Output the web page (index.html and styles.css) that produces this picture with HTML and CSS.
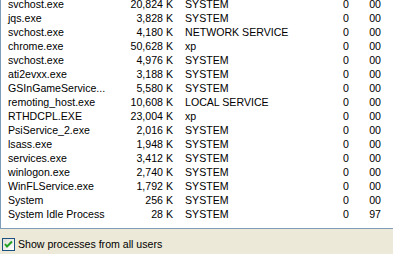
FILE: index.html
```html
<!DOCTYPE html>
<html>
<head>
<meta charset="utf-8">
<link rel="stylesheet" href="styles.css">
</head>
<body>
<div class="window">
  <div class="list">
    <div class="row"><span class="name">svchost.exe</span><span class="mem">20,824 K</span><span class="user">SYSTEM</span><span class="sess">0</span><span class="cpu">00</span></div>
    <div class="row"><span class="name">jqs.exe</span><span class="mem">3,828 K</span><span class="user">SYSTEM</span><span class="sess">0</span><span class="cpu">00</span></div>
    <div class="row"><span class="name">svchost.exe</span><span class="mem">4,180 K</span><span class="user">NETWORK SERVICE</span><span class="sess">0</span><span class="cpu">00</span></div>
    <div class="row"><span class="name">chrome.exe</span><span class="mem">50,628 K</span><span class="user">xp</span><span class="sess">0</span><span class="cpu">00</span></div>
    <div class="row"><span class="name">svchost.exe</span><span class="mem">4,976 K</span><span class="user">SYSTEM</span><span class="sess">0</span><span class="cpu">00</span></div>
    <div class="row"><span class="name">ati2evxx.exe</span><span class="mem">3,188 K</span><span class="user">SYSTEM</span><span class="sess">0</span><span class="cpu">00</span></div>
    <div class="row"><span class="name">GSInGameService...</span><span class="mem">5,580 K</span><span class="user">SYSTEM</span><span class="sess">0</span><span class="cpu">00</span></div>
    <div class="row"><span class="name">remoting_host.exe</span><span class="mem">10,608 K</span><span class="user">LOCAL SERVICE</span><span class="sess">0</span><span class="cpu">00</span></div>
    <div class="row"><span class="name">RTHDCPL.EXE</span><span class="mem">23,004 K</span><span class="user">xp</span><span class="sess">0</span><span class="cpu">00</span></div>
    <div class="row"><span class="name">PsiService_2.exe</span><span class="mem">2,016 K</span><span class="user">SYSTEM</span><span class="sess">0</span><span class="cpu">00</span></div>
    <div class="row"><span class="name">lsass.exe</span><span class="mem">1,948 K</span><span class="user">SYSTEM</span><span class="sess">0</span><span class="cpu">00</span></div>
    <div class="row"><span class="name">services.exe</span><span class="mem">3,412 K</span><span class="user">SYSTEM</span><span class="sess">0</span><span class="cpu">00</span></div>
    <div class="row"><span class="name">winlogon.exe</span><span class="mem">2,740 K</span><span class="user">SYSTEM</span><span class="sess">0</span><span class="cpu">00</span></div>
    <div class="row"><span class="name">WinFLService.exe</span><span class="mem">1,792 K</span><span class="user">SYSTEM</span><span class="sess">0</span><span class="cpu">00</span></div>
    <div class="row"><span class="name">System</span><span class="mem">256 K</span><span class="user">SYSTEM</span><span class="sess">0</span><span class="cpu">00</span></div>
    <div class="row"><span class="name">System Idle Process</span><span class="mem">28 K</span><span class="user">SYSTEM</span><span class="sess">0</span><span class="cpu">97</span></div>
  </div>
  <label class="footer">
    <span class="checkbox">
      <svg width="11" height="11" viewBox="0 0 11 11"><path d="M2 5 L4 7.5 L9 2.5" fill="none" stroke="#21a121" stroke-width="2"/></svg>
    </span>
    <span class="label">Show processes from all users</span>
  </label>
</div>
</body>
</html>
```
FILE: styles.css
```css
html, body {
  margin: 0;
  padding: 0;
  background: #ece9d8;
}
.window {
  width: 393px;
  height: 254px;
  display: flex;
  flex-direction: column;
  font-family: "Liberation Sans", Arial, sans-serif;
  font-size: 10.6px;
  color: #000;
  overflow: hidden;
}
.list {
  background: #fff;
  border-left: 1px solid #7f9db9;
  border-bottom: 1px solid #7f9db9;
  box-sizing: border-box;
  margin-top: -3px;
  height: 232px;
  flex: none;
}
.row {
  display: flex;
  height: 14px;
  line-height: 14px;
  white-space: nowrap;
}
.name {
  padding-left: 7px;
  width: 110px;
}
.mem {
  width: 55px;
  text-align: right;
}
.user {
  padding-left: 12px;
  width: 140px;
}
.sess {
  width: 24px;
  text-align: right;
}
.cpu {
  width: 32px;
  text-align: right;
}
.footer {
  display: flex;
  align-items: center;
  gap: 3px;
  padding-left: 2px;
  padding-top: 9px;
}
.checkbox {
  width: 11px;
  height: 11px;
  border: 1px solid #1c5180;
  background: linear-gradient(135deg, #dcdcd7, #fff);
  display: flex;
}
.label {
  line-height: 13px;
}
```
